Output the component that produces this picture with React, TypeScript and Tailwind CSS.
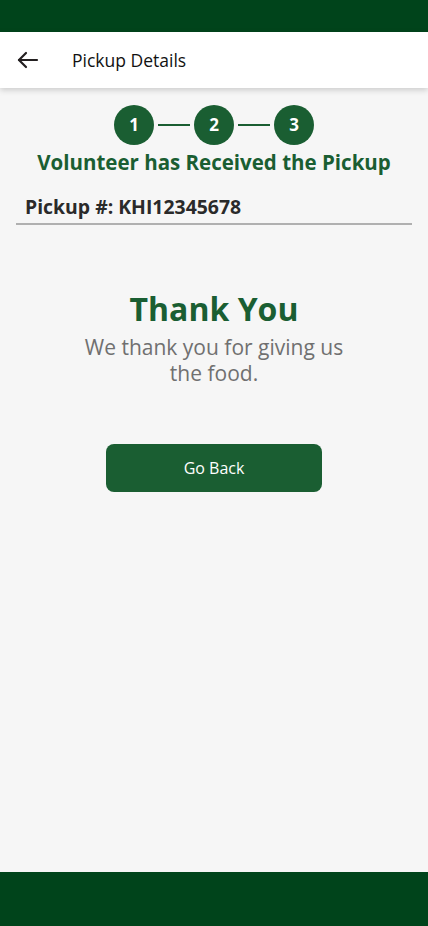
import React from "react";

export default function App() {
  const font = { fontFamily: '"Open Sans", "Noto Sans", sans-serif' };
  return (
    <div className="w-[428px] h-[926px] flex flex-col bg-[#f6f6f6]" style={font}>
      <div className="h-[32px] bg-[#00441b] shrink-0" />
      <div className="h-[56px] bg-white shrink-0 flex items-center shadow-[0_2px_6px_rgba(0,0,0,0.18)] relative z-10">
        <div className="w-[72px] flex items-center pl-[16px]">
          <svg width="24" height="24" viewBox="0 0 24 24" fill="none" stroke="#231f20" strokeWidth="2.2" strokeLinecap="round" strokeLinejoin="round">
            <path d="M21 12H3" />
            <path d="M10 5l-7 7 7 7" />
          </svg>
        </div>
        <span className="text-[17.5px] font-medium text-[#111]">Pickup Details</span>
      </div>
      <div className="flex-1 flex flex-col">
        <div className="flex items-center justify-center mt-[17px] gap-[4px]">
          {[1, 2, 3].map((n, i) => (
            <React.Fragment key={n}>
              {i > 0 && <div className="w-[32px] h-[2px] bg-[#1a5e32]" />}
              <div className="w-[40px] h-[40px] rounded-full bg-[#1a5e32] text-white flex items-center justify-center text-[17px] font-bold">
                {n}
              </div>
            </React.Fragment>
          ))}
        </div>
        <div className="text-center text-[20.5px] font-bold text-[#1a5e32] leading-[28px] mt-[3px]">
          Volunteer has Received the Pickup
        </div>
        <div className="mx-[16px] mt-[18px] border-b-2 border-[#b0b0b0] pb-[3px] pl-[9px] text-[19.4px] font-bold text-[#2a2a2a] leading-[26px]">
          Pickup #: KHI12345678
        </div>
        <div className="flex flex-col items-center mt-[62px]">
          <div className="text-[32px] font-bold text-[#1a5e32] leading-[44px]">Thank You</div>
          <div className="w-[290px] mt-[3px] text-center text-[21px] text-[#707070] leading-[26px]">
            We thank you for giving us the food.
          </div>
          <button className="mt-[58px] w-[216px] h-[48px] rounded-lg bg-[#1a5e32] text-white text-[16px]">
            Go Back
          </button>
        </div>
      </div>
      <div className="h-[54px] bg-[#00441b] shrink-0" />
    </div>
  );
}
